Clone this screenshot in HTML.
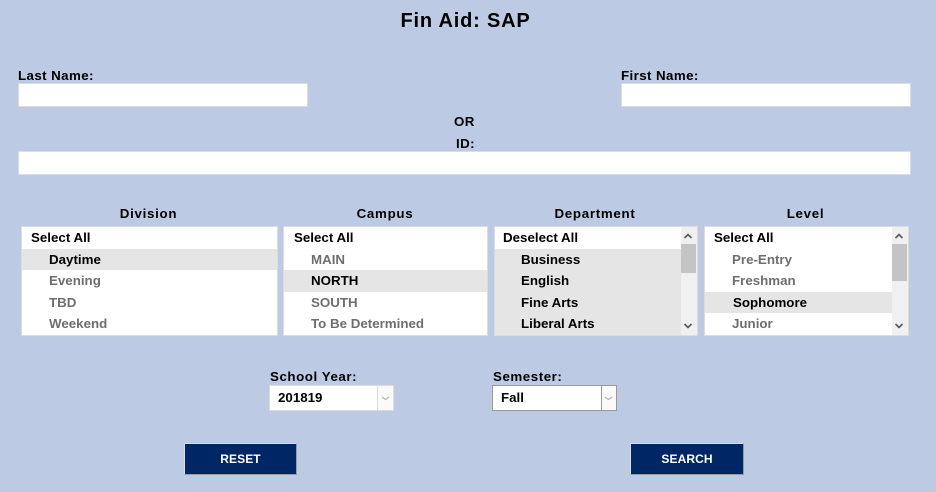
<!DOCTYPE html>
<html><head><meta charset="utf-8">
<style>
html,body{margin:0;padding:0}
body{width:936px;height:492px;background:#bccbe3;position:relative;overflow:hidden;font:bold 13.33px/16px "Liberation Sans",Arial,sans-serif;color:#000}
.t{position:absolute;white-space:nowrap;letter-spacing:.4px}
.in{position:absolute;background:#fff;border:1px solid #dcdcdc;box-sizing:border-box}
.box{position:absolute;top:226px;height:110px;background:#fff;border:1px solid #dcdcdc;box-sizing:border-box;overflow:hidden}
.row{position:absolute;left:0;height:22px;line-height:21px;white-space:nowrap;color:#6e6e6e}
.all{color:#000;padding-left:9px;top:0;height:22px}
.it{padding-left:27px}
.sel{background:#e5e5e5;color:#000}
.sb{position:absolute;top:0;right:0;width:16px;height:108px;background:#f0f0f0}
.th{position:absolute;left:0;top:17px;width:15px;background:#c4c4c4}
.sb svg{position:absolute;left:3px}
.hd{position:absolute;top:206px;text-align:center;letter-spacing:.7px}
.dd{position:absolute;top:385px;width:125px;height:26px;background:#fff;box-sizing:border-box;line-height:24px;padding-left:8px}
.arrow{position:absolute;top:0;right:0;height:24px;background:#fafafa;box-sizing:border-box}
.btn{position:absolute;top:443px;height:32px;background:#002663;color:#fff;text-align:center;font-weight:bold;font-size:12px;line-height:31px;box-sizing:border-box;border:1px solid;border-color:#dcdcdc #9a9a9a #9a9a9a #dcdcdc;letter-spacing:.1px}
</style></head>
<body>
<div class="t" style="left:0;width:931px;top:9px;text-align:center;font-size:20px;line-height:24px;letter-spacing:.8px">Fin Aid: SAP</div>

<div class="t" style="left:18px;top:68px">Last Name:</div>
<div class="in" style="left:18px;top:83px;width:290px;height:24px"></div>
<div class="t" style="left:621px;top:68px">First Name:</div>
<div class="in" style="left:621px;top:83px;width:290px;height:24px"></div>
<div class="t" style="left:454px;top:114px">OR</div>
<div class="t" style="left:456px;top:136px">ID:</div>
<div class="in" style="left:18px;top:151px;width:893px;height:24px"></div>

<div class="hd" style="left:21px;width:255px">Division</div>
<div class="box" style="left:21px;width:257px">
  <div class="row all" style="left:0;right:0">Select All</div>
  <div class="row it sel" style="top:22px;right:0;height:21px">Daytime</div>
  <div class="row it" style="top:43px;right:0">Evening</div>
  <div class="row it" style="top:65px;right:0">TBD</div>
  <div class="row it" style="top:86px;right:0">Weekend</div>
</div>

<div class="hd" style="left:283px;width:204px">Campus</div>
<div class="box" style="left:283px;width:205px">
  <div class="row all" style="left:0;right:0;padding-left:10px">Select All</div>
  <div class="row it sel" style="top:43px;right:0">NORTH</div>
  <div class="row it" style="top:22px;right:0">MAIN</div>
  <div class="row it" style="top:65px;right:0">SOUTH</div>
  <div class="row it" style="top:86px;right:0">To Be Determined</div>
</div>

<div class="hd" style="left:494px;width:202px">Department</div>
<div class="box" style="left:494px;width:204px">
  <div class="row all" style="left:0;right:0;padding-left:8px">Deselect All</div>
  <div class="row it sel" style="top:22px;left:0;width:185px;height:86px;background:#e5e5e5"></div>
  <div class="row it" style="top:22px;left:-1px;color:#000">Business</div>
  <div class="row it" style="top:43px;left:-1px;color:#000">English</div>
  <div class="row it" style="top:65px;left:-1px;color:#000">Fine Arts</div>
  <div class="row it" style="top:86px;left:-1px;color:#000">Liberal Arts</div>
  <div class="sb"><svg style="top:6px" width="8" height="6" viewBox="0 0 8 6"><path d="M.5 5 4 1.5 7.5 5" fill="none" stroke="#555" stroke-width="1.6"/></svg><div class="th" style="height:29px"></div><svg style="top:96px" width="8" height="6" viewBox="0 0 8 6"><path d="M.5 1 4 4.5 7.5 1" fill="none" stroke="#555" stroke-width="1.6"/></svg></div>
</div>

<div class="hd" style="left:704px;width:203px">Level</div>
<div class="box" style="left:704px;width:205px">
  <div class="row all" style="left:0;right:0">Select All</div>
  <div class="row it" style="top:22px;right:0">Pre-Entry</div>
  <div class="row it" style="top:43px;right:0">Freshman</div>
  <div class="row it sel" style="top:65px;left:0;width:186px;height:21px;padding-left:28px">Sophomore</div>
  <div class="row it" style="top:86px;right:0">Junior</div>
  <div class="sb"><svg style="top:6px" width="8" height="6" viewBox="0 0 8 6"><path d="M.5 5 4 1.5 7.5 5" fill="none" stroke="#555" stroke-width="1.6"/></svg><div class="th" style="height:37px"></div><svg style="top:96px" width="8" height="6" viewBox="0 0 8 6"><path d="M.5 1 4 4.5 7.5 1" fill="none" stroke="#555" stroke-width="1.6"/></svg></div>
</div>

<div class="t" style="left:270px;top:369px;letter-spacing:.55px">School Year:</div>
<div class="dd" style="left:269px;border:1px solid #dcdcdc">201819
  <div class="arrow" style="width:16px;border-left:1px solid #dcdcdc"><svg style="position:absolute;left:3px;top:10px" width="9" height="5" viewBox="0 0 9 5"><path d="M1 1 4.5 3.5 8 1" fill="none" stroke="#b4b4b4" stroke-width="1.3"/></svg></div>
</div>

<div class="t" style="left:493px;top:369px;letter-spacing:.55px">Semester:</div>
<div class="dd" style="left:492px;border:1px solid #999">Fall
  <div class="arrow" style="width:15px;border-left:1px solid #999"><svg style="position:absolute;left:2px;top:10px" width="9" height="5" viewBox="0 0 9 5"><path d="M1 1 4.5 3.5 8 1" fill="none" stroke="#b4b4b4" stroke-width="1.3"/></svg></div>
</div>

<div class="btn" style="left:184px;width:113px">RESET</div>
<div class="btn" style="left:630px;width:114px">SEARCH</div>
</body></html>
